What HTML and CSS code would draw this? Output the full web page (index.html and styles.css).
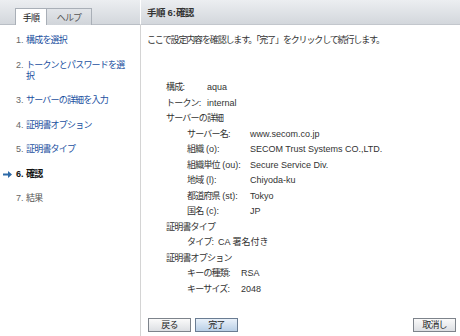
FILE: index.html
```html
<!DOCTYPE html>
<html lang="ja">
<head>
<meta charset="utf-8">
<link rel="stylesheet" href="styles.css">
</head>
<body>
<div class="app">
  <aside class="side">
    <div class="tabbar">
      <div class="tab active">手順</div>
      <div class="tab">ヘルプ</div>
    </div>
    <ol class="steps">
      <li class="step"><span class="num">1.</span><a class="link">構成を選択</a></li>
      <li class="step"><span class="num">2.</span><a class="link">トークンとパスワードを選択</a></li>
      <li class="step"><span class="num">3.</span><a class="link">サーバーの詳細を入力</a></li>
      <li class="step"><span class="num">4.</span><a class="link">証明書オプション</a></li>
      <li class="step"><span class="num">5.</span><a class="link">証明書タイプ</a></li>
      <li class="step current"><span class="arrow"><svg width="9" height="7" viewBox="0 0 9 7"><path d="M0 2.5h5V0l4 3.5L5 7V4.5H0z" fill="#2d6aa8"/></svg></span><span class="num">6.</span><span>確認</span></li>
      <li class="step plain"><span class="num">7.</span><span>結果</span></li>
    </ol>
  </aside>
  <main class="main">
    <div class="header">手順<span class="lat"> 6:</span>確認</div>
    <p class="intro">ここで設定内容を確認します。「完了」をクリックして続行します。</p>
    <div class="summary">
      <div class="row"><span class="k k1">構成:</span><span class="v">aqua</span></div>
      <div class="row"><span class="k k1">トークン:</span><span class="v">internal</span></div>
      <div class="row">サーバーの詳細</div>
      <div class="sub">
        <div class="row"><span class="k k2">サーバー名:</span><span class="v">www.secom.co.jp</span></div>
        <div class="row"><span class="k k2">組織<span class="lat"> (o):</span></span><span class="v">SECOM Trust Systems CO.,LTD.</span></div>
        <div class="row"><span class="k k2">組織単位<span class="lat"> (ou):</span></span><span class="v">Secure Service Div.</span></div>
        <div class="row"><span class="k k2">地域<span class="lat"> (l):</span></span><span class="v">Chiyoda-ku</span></div>
        <div class="row"><span class="k k2">都道府県<span class="lat"> (st):</span></span><span class="v">Tokyo</span></div>
        <div class="row"><span class="k k2">国名<span class="lat"> (c):</span></span><span class="v">JP</span></div>
      </div>
      <div class="row">証明書タイプ</div>
      <div class="sub">
        <div class="row"><span class="k k3">タイプ:</span><span class="v">CA 署名付き</span></div>
      </div>
      <div class="row">証明書オプション</div>
      <div class="sub">
        <div class="row"><span class="k k4">キーの種類:</span><span class="v">RSA</span></div>
        <div class="row"><span class="k k4">キーサイズ:</span><span class="v">2048</span></div>
      </div>
    </div>
    <div class="buttons">
      <button class="btn">戻る</button>
      <button class="btn primary">完了</button>
      <span class="spacer"></span>
      <button class="btn">取消し</button>
    </div>
  </main>
</div>
</body>
</html>
```
FILE: styles.css
```css
* { box-sizing: border-box; }
html, body { margin: 0; padding: 0; }
body {
  width: 460px;
  height: 336px;
  background: #fff;
  font-family: "Liberation Sans", "Noto Sans CJK JP", sans-serif;
  font-size: 9px;
  letter-spacing: -0.8px;
  color: #333;
  overflow: hidden;
}
.app {
  display: flex;
  height: 336px;
}
.side {
  width: 141px;
  border-right: 1px solid #d4d4d4;
  display: flex;
  flex-direction: column;
}
.tabbar {
  height: 25px;
  background: linear-gradient(#eceef1, #d3d7dc);
  border-bottom: 1px solid #b9bec5;
  display: flex;
  align-items: flex-end;
  padding-left: 15px;
  margin-right: -1px;
  border-right: 1px solid #fff;
}
.tab {
  height: 17px;
  margin-bottom: -1px;
  display: flex;
  align-items: center;
  justify-content: center;
  color: #555;
  border: 1px solid #a9afb7;
  border-bottom: none;
  background: linear-gradient(#e2e5e9, #d0d4d9);
}
.tab.active {
  width: 31px;
  background: #fff;
  color: #222;
  border-right: none;
}
.tab:not(.active) { width: 46px; }
.steps {
  list-style: none;
  margin: 0;
  padding: 10px 0 0 0;
}
.step {
  display: flex;
  position: relative;
  padding-left: 16px;
  padding-right: 11px;
  line-height: 11px;
  margin-bottom: 13.5px;
}
.num {
  width: 10px;
  flex: none;
  color: #666;
  letter-spacing: 0;
}
.link { color: #1a4fa0; }
.current { color: #111; font-weight: bold; }
.current .num { color: #111; }
.plain { color: #555; }
.arrow {
  position: absolute;
  left: 3px;
  top: 2px;
  line-height: 0;
}
.main {
  flex: 1;
  display: flex;
  flex-direction: column;
}
.header {
  height: 25px;
  background: linear-gradient(#eceef1, #d3d7dc);
  border-bottom: 1px solid #c3c7cd;
  font-weight: bold;
  font-size: 9.5px;
  letter-spacing: -0.6px;
  color: #333;
  padding-left: 6px;
  display: flex;
  align-items: center;
  white-space: pre;
}
.lat { letter-spacing: 0; white-space: pre; }
.intro {
  margin: 10px 0 0 6px;
  line-height: 11px;
  letter-spacing: -1.15px;
}
.summary {
  margin: 34px 0 0 25px;
}
.row {
  display: flex;
  line-height: 15.5px;
}
.sub { padding-left: 21px; }
.k { flex: none; }
.v { letter-spacing: 0; }
.k1 { width: 41px; }
.k2 { width: 63px; }
.k3 { width: 31px; }
.k4 { width: 54px; }
.buttons {
  margin-top: auto;
  display: flex;
  padding: 0 4px 4px 7px;
  gap: 4px;
}
.spacer { flex: 1; }
.btn {
  font: inherit;
  letter-spacing: -0.8px;
  height: 14px;
  width: 43px;
  padding: 0;
  color: #222;
  border: 1px solid #7d838b;
  background: linear-gradient(#fafafa, #dcdfe3);
  border-radius: 0;
  line-height: 12px;
}
.btn.primary {
  background: linear-gradient(#e9f1fa, #b9cfe6);
  border-color: #6a7c92;
}
```
